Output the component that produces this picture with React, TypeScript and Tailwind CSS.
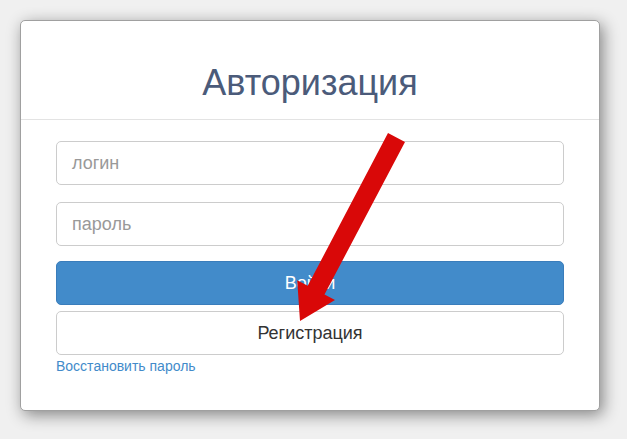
import React from "react";

export default function App() {
  return (
    <div className="relative w-[627px] h-[439px] bg-[#f0f0f0] overflow-hidden" style={{ fontFamily: '"Liberation Sans", Arial, sans-serif' }}>
      <div className="pt-[20px] pl-[20px]">
        <div className="w-[580px] h-[391px] bg-white border border-[#a0a0a0] rounded-[5px] shadow-[3px_4px_16px_rgba(0,0,0,0.45)] flex flex-col">
          <div className="h-[99px] border-b border-[#e3e3e3] flex items-end justify-center pb-[16px]">
            <h1 className="text-[36px] leading-[40px] text-[#4b5b7a]">Авторизация</h1>
          </div>
          <div className="px-[35px] pt-[21px] flex flex-col">
            <div className="h-[44px] border border-[#cccccc] rounded-[5px] flex items-center px-[15px] text-[18px] text-[#999999]">логин</div>
            <div className="h-[44px] mt-[17px] border border-[#cccccc] rounded-[5px] flex items-center px-[15px] text-[18px] text-[#999999]">пароль</div>
            <div className="h-[44px] mt-[15px] bg-[#428bca] border border-[#3a7dbb] rounded-[5px] flex items-center justify-center text-[18px] text-white">Войти</div>
            <div className="h-[44px] mt-[6px] border border-[#cccccc] rounded-[5px] flex items-center justify-center text-[18px] text-[#333333]">Регистрация</div>
            <div className="mt-[2px] text-[14px] leading-[18px] text-[#428bca]">Восстановить пароль</div>
          </div>
        </div>
      </div>
      <svg className="absolute left-0 top-0" width="627" height="439" viewBox="0 0 627 439">
        <polygon
          points="388,133 405,142 324.5,294.6 335,300 300,321 297.2,280.3 307.7,285.8"
          fill="#d90808"
        />
      </svg>
    </div>
  );
}
